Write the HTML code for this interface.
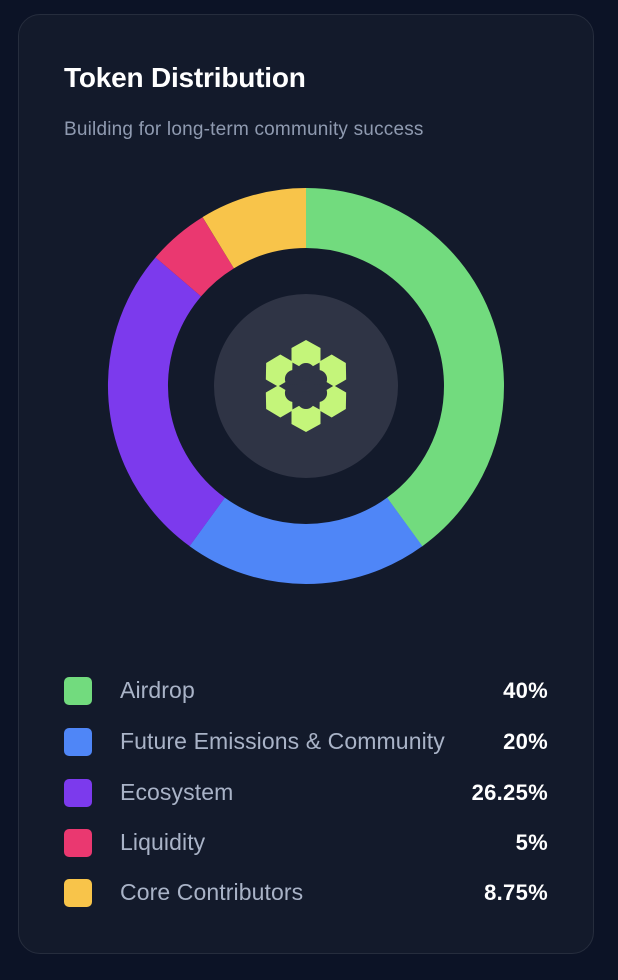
<!DOCTYPE html>
<html><head><style>
body{margin:0;width:618px;height:980px;background:#0c1326;font-family:"Liberation Sans",sans-serif;position:relative;overflow:hidden}
.card{position:absolute;left:18px;top:14px;width:576px;height:940px;background:#131a2b;border:1px solid #262d3d;border-radius:22px;box-sizing:border-box}
h1{position:absolute;left:64px;top:62px;margin:0;color:#fff;font-size:28px;font-weight:bold;letter-spacing:-0.2px}
.sub{position:absolute;left:64px;top:119px;color:#8f9ab0;font-size:19px;letter-spacing:0.2px}
.row{position:absolute;left:64px;width:484px;height:28px}
.sq{position:absolute;left:0;top:0;width:28px;height:28px;border-radius:5px}
.lb{position:absolute;left:56px;top:0px;color:#a9b3c7;font-size:23px;letter-spacing:0.1px}
.v{position:absolute;right:0;top:1px;color:#fff;font-size:22px;font-weight:bold;letter-spacing:0.3px}
</style></head><body>
<div class="card"></div>
<h1>Token Distribution</h1>
<div class="sub">Building for long-term community success</div>
<svg width="618" height="980" style="position:absolute;left:0;top:0">
<g transform="translate(306,386)">
<circle r="168" fill="none" stroke="#72db7e" stroke-width="60" stroke-dasharray="422.23 1055.58" transform="rotate(-90)"/>
<circle r="168" fill="none" stroke="#4f86f7" stroke-width="60" stroke-dasharray="211.12 1055.58" transform="rotate(54)"/>
<circle r="168" fill="none" stroke="#7c3aed" stroke-width="60" stroke-dasharray="277.09 1055.58" transform="rotate(126)"/>
<circle r="168" fill="none" stroke="#ea3870" stroke-width="60" stroke-dasharray="52.78 1055.58" transform="rotate(220.5)"/>
<circle r="168" fill="none" stroke="#f8c44a" stroke-width="60" stroke-dasharray="92.36 1055.58" transform="rotate(238.5)"/>
<circle r="92" fill="#2f3445"/>
<g fill="#c4f57a">
<polygon id="h" points="0,-46 14.5,-38 14.5,-24 0,-16 -14.5,-24 -14.5,-38"/>
<use href="#h" transform="rotate(60)"/><use href="#h" transform="rotate(120)"/>
<use href="#h" transform="rotate(180)"/><use href="#h" transform="rotate(240)"/><use href="#h" transform="rotate(300)"/>
</g>
<g fill="#2f3445">
<circle r="16"/>
<circle r="9" cx="0" cy="-14"/><circle r="9" cx="0" cy="14"/>
<circle r="9" cx="12.1" cy="-7"/><circle r="9" cx="-12.1" cy="-7"/>
<circle r="9" cx="12.1" cy="7"/><circle r="9" cx="-12.1" cy="7"/>
</g>
</g>
</svg>
<div class="row" style="top:677px"><div class="sq" style="background:#72db7e"></div><div class="lb">Airdrop</div><div class="v">40%</div></div>
<div class="row" style="top:728px"><div class="sq" style="background:#4f86f7"></div><div class="lb">Future Emissions &amp; Community</div><div class="v">20%</div></div>
<div class="row" style="top:779px"><div class="sq" style="background:#7c3aed"></div><div class="lb">Ecosystem</div><div class="v">26.25%</div></div>
<div class="row" style="top:829px"><div class="sq" style="background:#ea3870"></div><div class="lb">Liquidity</div><div class="v">5%</div></div>
<div class="row" style="top:879px"><div class="sq" style="background:#f8c44a"></div><div class="lb">Core Contributors</div><div class="v">8.75%</div></div>
</body></html>
